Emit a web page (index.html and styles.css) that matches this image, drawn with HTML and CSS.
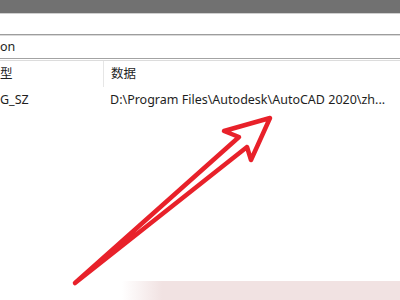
FILE: index.html
```html
<!DOCTYPE html>
<html>
<head>
<meta charset="utf-8">
<title>注册表编辑器</title>
<link rel="stylesheet" href="styles.css">
</head>

<body>
<div id="page">
	<div class="titlebar"></div>
	<div class="blank"></div>
	<div class="addr">on</div>
	<div class="head">
		<div class="col type">型</div>
		<div class="col data">数据</div>
	</div>
	<div class="row">
		<div class="col type">G_SZ</div>
		<div class="col data">D:\Program Files\Autodesk\AutoCAD 2020\zh...</div>
	</div>
	<div class="band"></div>
	<svg class="arrow" width="400" height="300" viewBox="0 0 400 300">
		<polygon points="75,283 239,137 224,131 270,118 251,160 247,147" fill="none" stroke="#e8212a" stroke-width="4.5" stroke-linejoin="round"/>
	</svg>
</div>
</body>
</html>
```

FILE: styles.css
```css
*{margin:0; padding:0;}
body{background:#fff; font-family:"Noto Sans","Noto Sans CJK SC",sans-serif; font-size:12.5px; color:#1e1e1e;}
#page{width:400px; height:300px; position:relative; overflow:hidden; display:flex; flex-direction:column;}
.titlebar{height:13px; background:#717171; border-bottom:1px solid #cfcfcf;}
.blank{height:20px; border-bottom:1px solid #9d9d9d;}
.addr{height:22px; line-height:22px; border-top:1px solid #dadada; border-bottom:1px solid #a3a3a3; white-space:nowrap;}
.head{display:flex; height:26px; line-height:26px; border-top:1px solid #dcdcdc; margin-top:1px;}
.head .col{padding-top:0;}
.head .data{border-left:1px solid #e6e6e6;}
.row{display:flex; height:22px; line-height:22px; margin-top:2px;}
.col{white-space:nowrap;}
.type{width:103px;}
.data{padding-left:7px;}
.band{margin:auto 0 0 122px; height:19px; background:linear-gradient(to right,#fff,#f1e2e2 40px,#f1e2e2);}
.arrow{position:absolute; top:0; left:0;}
```
